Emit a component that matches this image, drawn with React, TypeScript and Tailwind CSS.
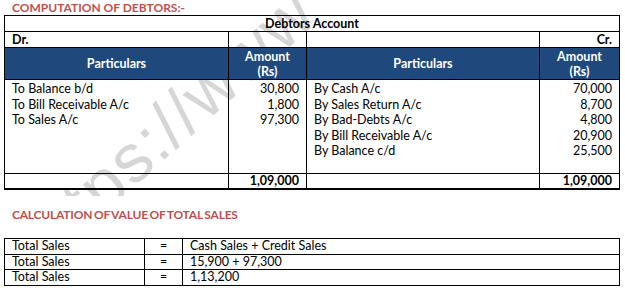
const debitRows = [
  { label: "To Balance b/d", amount: "30,800" },
  { label: "To Bill Receivable A/c", amount: "1,800" },
  { label: "To Sales A/c", amount: "97,300" },
];

const creditRows = [
  { label: "By Cash A/c", amount: "70,000" },
  { label: "By Sales Return A/c", amount: "8,700" },
  { label: "By Bad-Debts A/c", amount: "4,800" },
  { label: "By Bill Receivable A/c", amount: "20,900" },
  { label: "By Balance c/d", amount: "25,500" },
];

const salesRows = [
  { left: "Total Sales", right: "Cash Sales + Credit Sales" },
  { left: "Total Sales", right: "15,900 + 97,300" },
  { left: "Total Sales", right: "1,13,200" },
];

const App = () => {
  return (
    <div className="relative w-[625px] h-[288px] overflow-hidden bg-white font-['Lato','Liberation_Sans',sans-serif] text-[12.5px] text-black">
      {/* watermark, sits under the tables */}
      <div className="pointer-events-none absolute left-0 top-0 h-[196px] w-[625px] overflow-hidden select-none">
        <div className="absolute left-[4px] top-[226px] origin-top-left -rotate-[42deg] whitespace-nowrap font-['Liberation_Sans',sans-serif] text-[68px] leading-none tracking-[2px] text-[#d6d6d6]">
          https://www
        </div>
      </div>

      <div className="relative">
        {/* Section 1 */}
        <div className="h-[15px] pl-[12px] text-[12px] leading-[15px] font-bold text-[#c0504d]">
          COMPUTATION OF DEBTORS:-
        </div>

        <table className="ml-[4px] w-[615px] table-fixed border-collapse">
          <colgroup>
            <col className="w-[224px]" />
            <col className="w-[78px]" />
            <col className="w-[233px]" />
            <col className="w-[80px]" />
          </colgroup>
          <tbody>
            <tr className="h-[16px]">
              <td colSpan={4} className="border border-black p-0 text-center font-bold leading-[15px]">
                Debtors Account
              </td>
            </tr>
            <tr className="h-[16px]">
              <td className="border border-black p-0 pl-[7px] font-bold leading-[15px]">Dr.</td>
              <td className="border border-black p-0"></td>
              <td className="border border-black p-0"></td>
              <td className="border border-black p-0 pr-[7px] text-right font-bold leading-[15px]">Cr.</td>
            </tr>
            <tr className="h-[32px] bg-[#1f497d] text-white font-bold">
              <td className="border border-black p-0 text-center leading-[15px]">Particulars</td>
              <td className="border border-black p-0 text-center leading-[15px]">
                Amount
                <br />
                (Rs)
              </td>
              <td className="border border-black p-0 text-center leading-[15px]">Particulars</td>
              <td className="border border-black p-0 text-center leading-[15px]">
                Amount
                <br />
                (Rs)
              </td>
            </tr>
            <tr className="h-[94px] align-top">
              <td className="border border-black p-0 pt-[1px] pl-[7px] leading-[15.5px]">
                {debitRows.map((r) => (
                  <div key={r.label}>{r.label}</div>
                ))}
              </td>
              <td className="border border-black p-0 pt-[1px] pr-[7px] text-right leading-[15.5px]">
                {debitRows.map((r) => (
                  <div key={r.label}>{r.amount}</div>
                ))}
              </td>
              <td className="border border-black p-0 pt-[1px] pl-[7px] leading-[15.5px]">
                {creditRows.map((r) => (
                  <div key={r.label}>{r.label}</div>
                ))}
              </td>
              <td className="border border-black p-0 pt-[1px] pr-[7px] text-right leading-[15.5px]">
                {creditRows.map((r) => (
                  <div key={r.label}>{r.amount}</div>
                ))}
              </td>
            </tr>
            <tr className="h-[15px] font-bold">
              <td className="border border-black border-b-2 p-0"></td>
              <td className="border border-black border-b-2 p-0 pr-[7px] text-right leading-[14px]">1,09,000</td>
              <td className="border border-black border-b-2 p-0"></td>
              <td className="border border-black border-b-2 p-0 pr-[7px] text-right leading-[14px]">1,09,000</td>
            </tr>
          </tbody>
        </table>

        {/* Section 2 */}
        <div className="mt-[17px] h-[15px] pl-[12px] text-[12px] leading-[15px] font-bold tracking-[-0.2px] [word-spacing:-1px] text-[#c0504d]">
          CALCULATION OF VALUE OF TOTAL SALES
        </div>

        <table className="mt-[16px] ml-[4px] w-[615px] table-fixed border-collapse">
          <colgroup>
            <col className="w-[140px]" />
            <col className="w-[38px]" />
            <col className="w-[437px]" />
          </colgroup>
          <tbody>
            {salesRows.map((r, i) => (
              <tr key={i} className="h-[15.5px]">
                <td className="border border-black p-0 pl-[7px] leading-[14px]">{r.left}</td>
                <td className="border border-black p-0 text-center leading-[14px]">=</td>
                <td className="border border-black p-0 pl-[7px] leading-[14px]">{r.right}</td>
              </tr>
            ))}
          </tbody>
        </table>
      </div>
    </div>
  );
};

export default App;
